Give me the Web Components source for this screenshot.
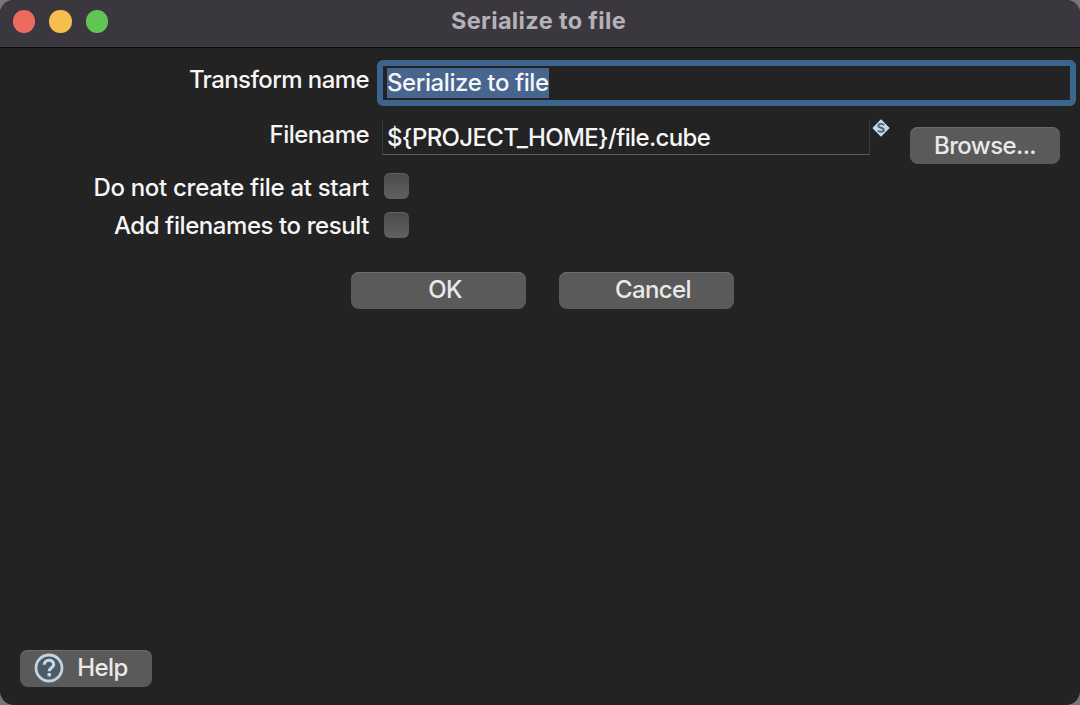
<!DOCTYPE html>
<html lang="en">
<head>
<meta charset="utf-8">
<title>Serialize to file</title>
<style>
  body {
    margin: 0;
    background: #77757a;
    overflow: hidden;
  }
</style>
</head>
<body>
<dialog-window heading="Serialize to file">
  <form-row label="Transform name" style="--row-height: 58px; --label-top: 17px; --control-top: 12px; --control-left: 8px; letter-spacing: -.58px">
    <text-field value="Serialize to file" style="letter-spacing: -.41px" focused></text-field>
  </form-row>
  <form-row label="Filename" style="--row-height: 65px; --label-top: 14px; --control-top: 14px; --control-left: 13px; letter-spacing: -.55px">
    <text-field value="${PROJECT_HOME}/file.cube" style="letter-spacing: -.66px"></text-field>
    <variable-icon></variable-icon>
    <push-button style="width: 150px; margin: 7px 20px 0 20px; --nudge: -1px">Browse...</push-button>
  </form-row>
  <form-row label="Do not create file at start" style="--row-height: 39px; --label-top: 2px; --control-top: 2px; --control-left: 15px; letter-spacing: -.29px">
    <check-box></check-box>
  </form-row>
  <form-row label="Add filenames to result" style="--row-height: 39px; --label-top: 1px; --control-top: 2px; --control-left: 15px; letter-spacing: -.42px">
    <check-box></check-box>
  </form-row>
  <push-button slot="actions" style="width: 175px; --nudge: 13px">OK</push-button>
  <push-button slot="actions" style="width: 175px; --nudge: 13px">Cancel</push-button>
  <push-button slot="footer" style="width: 132px; --nudge: 0px; --shift: 10px"><help-icon slot="icon"></help-icon>Help</push-button>
</dialog-window>

<script>
// The window frame: title bar, form rows, action buttons and a footer.
class DialogWindow extends HTMLElement {
  constructor() {
    super();
    this.attachShadow({ mode: 'open' });
  }

  connectedCallback() {
    this.shadowRoot.innerHTML = `
      <style>
        :host {
          display: flex;
          flex-direction: column;
          box-sizing: border-box;
          width: 1080px;
          height: 705px;
          border-radius: 14px;
          overflow: hidden;
          background: #232323;
          color: #f6f6f6;
          font: 450 24px/30px Inter, "Liberation Sans", sans-serif;
        }
        header {
          display: grid;
          grid-template-columns: 1fr auto 1fr;
          box-sizing: border-box;
          height: 48px;
          padding: 0 12px 4px;
          align-items: center;
          background: #3b373e;
          border-bottom: 1px solid #0c0a0c;
        }
        .lights {
          display: flex;
          gap: 14px;
          padding-left: .5px;
        }
        .lights i {
          width: 22.5px;
          height: 22.5px;
          border-radius: 50%;
        }
        .close { background: #ed6a5e; }
        .minimize { background: #f5bf4f; }
        .zoom { background: #61c554; }
        h1 {
          margin: -2px 3px 0 0;
          font-size: 23.5px;
          font-weight: 700;
          letter-spacing: .35px;
          color: #b5b2b7;
        }
        .actions {
          display: flex;
          gap: 33px;
          padding: 23px 0 0 351px;
        }
        footer {
          display: flex;
          margin-top: auto;
          padding: 0 20px 18px;
        }
      </style>
      <header>
        <div class="lights">
          <i class="close"></i>
          <i class="minimize"></i>
          <i class="zoom"></i>
        </div>
        <h1>${this.getAttribute('heading')}</h1>
      </header>
      <slot></slot>
      <div class="actions"><slot name="actions"></slot></div>
      <footer><slot name="footer"></slot></footer>
    `;
  }
}

customElements.define('dialog-window', DialogWindow);

// A right-aligned label with its controls beside it.
class FormRow extends HTMLElement {
  constructor() {
    super();
    this.attachShadow({ mode: 'open' });
  }

  connectedCallback() {
    this.shadowRoot.innerHTML = `
      <style>
        :host {
          display: grid;
          grid-template-columns: 369px 1fr;
          height: var(--row-height);
        }
        label {
          padding-top: var(--label-top);
          text-align: right;
          white-space: nowrap;
        }
        .controls {
          display: flex;
          align-items: flex-start;
          padding: var(--control-top) 0 0 var(--control-left);
        }
      </style>
      <label>${this.getAttribute('label')}</label>
      <div class="controls"><slot></slot></div>
    `;
  }
}

customElements.define('form-row', FormRow);

// Single line text. When focused it has a ring and its value is selected.
class TextField extends HTMLElement {
  constructor() {
    super();
    this.attachShadow({ mode: 'open' });
  }

  connectedCallback() {
    this.shadowRoot.innerHTML = `
      <style>
        :host {
          display: block;
          flex: 1;
          box-sizing: border-box;
          height: 35px;
          padding: 3px 0 0 4px;
          border: 1px solid #3a3a3a;
          border-top: 0;
          border-bottom-color: #5c5c5c;
          white-space: nowrap;
        }
        :host([focused]) {
          height: 46px;
          margin-right: 4px;
          padding: 2px 4px;
          border: 6px solid #3c658e;
          border-radius: 6px;
        }
        span {
          display: inline-block;
        }
        :host([focused]) span {
          background: #48658f;
        }
      </style>
      <span>${this.getAttribute('value')}</span>
    `;
  }
}

customElements.define('text-field', TextField);

class CheckBox extends HTMLElement {
  constructor() {
    super();
    this.attachShadow({ mode: 'open' });
    this.shadowRoot.innerHTML = `
      <style>
        :host {
          display: block;
          width: 25px;
          height: 26px;
          border-radius: 6px;
          background: linear-gradient(#4b4b4b, #616161);
          box-shadow: inset 0 1px #626262;
        }
      </style>
    `;
  }
}

customElements.define('check-box', CheckBox);

class PushButton extends HTMLElement {
  constructor() {
    super();
    this.attachShadow({ mode: 'open' });
    this.shadowRoot.innerHTML = `
      <style>
        :host {
          display: flex;
          box-sizing: border-box;
          height: 37px;
          padding: 0 var(--shift, 0) 2px var(--nudge, 0);
          align-items: center;
          justify-content: center;
          border-radius: 8px;
          background: #5a5a5a;
          box-shadow: inset 0 1px #6c6c6c;
          color: #e9e9e9;
          letter-spacing: -.6px;
        }
      </style>
      <slot name="icon"></slot>
      <span><slot></slot></span>
    `;
  }
}

customElements.define('push-button', PushButton);

// Small diamond that marks a field which accepts variables.
class VariableIcon extends HTMLElement {
  constructor() {
    super();
    this.attachShadow({ mode: 'open' });
    this.shadowRoot.innerHTML = `
      <style>
        :host {
          display: block;
          width: 20px;
          height: 20px;
          margin-top: -2px;
        }
        svg { display: block; }
      </style>
      <svg width="20" height="20" viewBox="0 0 20 20">
        <path d="M11 .8 L20 10 L11 19.2 L2 10 Z" fill="#c3d8e6" stroke="#233746" stroke-width=".8" stroke-linejoin="round"/>
        <path d="M14 7.2 C13 5.4 8.3 5.3 8.3 7.8 C8.3 10.2 13.8 9.3 13.8 12 C13.8 14.4 9 14.3 8 12.4" fill="none" stroke="#4d687c" stroke-width="1.9"/>
      </svg>
    `;
  }
}

customElements.define('variable-icon', VariableIcon);

class HelpIcon extends HTMLElement {
  constructor() {
    super();
    this.attachShadow({ mode: 'open' });
    this.shadowRoot.innerHTML = `
      <style>
        :host {
          display: block;
          margin-right: 13px;
        }
        svg { display: block; }
      </style>
      <svg width="30" height="30" viewBox="0 0 30 30">
        <circle cx="15" cy="15" r="13" fill="#4d5b66" stroke="#bfd5e4" stroke-width="2.8"/>
        <path d="M10.3 11.8 C10.3 5.9 19.7 5.9 19.7 11.4 C19.7 14.8 15.2 14.5 15.2 18.2" fill="none" stroke="#c6dae7" stroke-width="3.1"/>
        <rect x="13.5" y="20" width="3.4" height="3.4" fill="#c6dae7"/>
      </svg>
    `;
  }
}

customElements.define('help-icon', HelpIcon);
</script>
</body>
</html>
